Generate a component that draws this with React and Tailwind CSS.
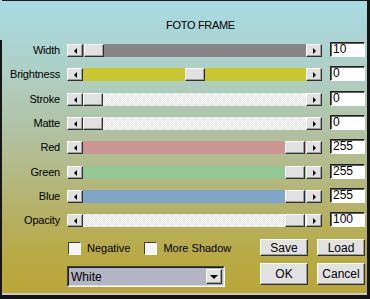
import React from 'react';

const rows = [
  { label: 'Width', value: '10', pos: 0.005, track: 'bg-[#868686]', mt: 'mt-0' },
  { label: 'Brightness', value: '0', pos: 0.505, track: 'bg-[#c9c72f]', mt: 'mt-[11px]' },
  { label: 'Stroke', value: '0', pos: 0, track: 'dots', mt: 'mt-[12px]' },
  { label: 'Matte', value: '0', pos: 0, track: 'dots', mt: 'mt-[11px]' },
  { label: 'Red', value: '255', pos: 1, track: 'bg-[#c99595]', mt: 'mt-[11px]' },
  { label: 'Green', value: '255', pos: 1, track: 'bg-[#95c695]', mt: 'mt-[12px]' },
  { label: 'Blue', value: '255', pos: 1, track: 'bg-[#7fa6c9]', mt: 'mt-[11px]' },
  { label: 'Opacity', value: '100', pos: 1, track: 'dots', mt: 'mt-[11px]' },
];

const raised =
  'bg-[#e1e1e1] border border-t-white border-l-white border-b-[#303030] border-r-[#303030] shadow-[inset_-1px_-1px_0_#a0a0a0]';

function ArrowBtn({ dir }) {
  return (
    <div className={`w-[16px] h-[13px] flex items-center justify-center shrink-0 ${raised}`}>
      {dir === 'left' ? (
        <div className="w-0 h-0 border-y-[3px] border-y-transparent border-r-[3px] border-r-black" />
      ) : (
        <div className="w-0 h-0 border-y-[3px] border-y-transparent border-l-[3px] border-l-black" />
      )}
    </div>
  );
}

function Slider({ pos, track }) {
  const trackCls =
    track === 'dots'
      ? 'bg-white bg-[image:repeating-conic-gradient(#e4e4e4_0_25%,#ffffff_0_50%)] bg-[length:2px_2px]'
      : track;
  return (
    <div className="w-[255px] h-[13px] flex shrink-0">
      <ArrowBtn dir="left" />
      <div className={`relative flex-1 h-full ${trackCls}`}>
        <div
          className={`absolute top-0 w-[20px] h-[13px] ${raised}`}
          style={{ left: `${pos * (222 - 20)}px` }}
        />
      </div>
      <ArrowBtn dir="right" />
    </div>
  );
}

function Checkbox({ label }) {
  return (
    <div className="flex items-center gap-[6px]">
      <div className="w-[13px] h-[13px] bg-[#f4f4f4] border border-t-[#404040] border-l-[#404040] border-b-white border-r-white" />
      <span className="text-[11px] leading-[13px] text-black">{label}</span>
    </div>
  );
}

function Button({ children, h }) {
  return (
    <div className={`w-[48px] ${h} flex items-center justify-center text-[12px] text-black ${raised}`}>
      {children}
    </div>
  );
}

export default function App() {
  return (
    <div
      className="w-[370px] h-[299px] flex bg-[linear-gradient(to_bottom,#a8dae4_0%,#aecfc4_25%,#b1c1a0_45%,#b4b574_65%,#b8aa45_85%,#b9a637_100%)] text-black"
      style={{ fontFamily: '"Liberation Sans", Arial, sans-serif' }}
    >
      <div className="w-[2px] h-full bg-[linear-gradient(to_bottom,transparent_40px,#161616_40px)]" />
      <div className="flex-1 flex flex-col border-t border-t-[#1c1c1c]">
        <div className="h-[43px] pt-[18px] pl-[164px] text-[11px] leading-[13px] tracking-[-0.3px]">FOTO FRAME</div>

        {rows.map((r) => (
          <div key={r.label} className={`flex items-center h-[13px] ${r.mt}`}>
            <div className="w-[58px] text-right text-[11px] leading-[13px] tracking-[-0.2px]">{r.label}</div>
            <div className="ml-[7px]">
              <Slider pos={r.pos} track={r.track} />
            </div>
            <div className="ml-[8px] w-[35px] h-[15px] -mt-[2px] bg-white border border-t-[#202020] border-l-[#202020] border-b-white border-r-white shadow-[inset_1px_1px_0_#606060] text-[12px] leading-[13px] pl-[2px]">
              {r.value}
            </div>
          </div>
        ))}

        <div className="flex mt-[12px] h-[17px]">
          <div className="ml-[66px] mt-[1px] flex gap-[14px]">
            <Checkbox label="Negative" />
            <Checkbox label="More Shadow" />
          </div>
          <div className="ml-auto mr-[2px] flex gap-[9px]">
            <Button h="h-[17px]">Save</Button>
            <Button h="h-[17px]">Load</Button>
          </div>
        </div>

        <div className="flex mt-[7px] h-[22px]">
          <div className="ml-[65px] mt-[3px] w-[158px] h-[21px] flex items-center border border-t-[#404040] border-l-[#404040] border-b-white border-r-white">
            <div className="flex-1 h-full flex items-center bg-[#b3b4c6] border border-t-[#202020] border-l-[#202020] border-b-[#dcdcdc] border-r-[#dcdcdc] pl-[2px] text-[12px]">
              White
              <div className={`ml-auto mr-[1px] w-[16px] h-[15px] flex items-center justify-center ${raised}`}>
                <div className="w-0 h-0 border-x-[4px] border-x-transparent border-t-[4px] border-t-black" />
              </div>
            </div>
          </div>
          <div className="ml-auto mr-[2px] flex gap-[9px]">
            <Button h="h-[22px]">OK</Button>
            <Button h="h-[22px]">Cancel</Button>
          </div>
        </div>

        <div className="mt-auto h-[2px] bg-[#c9c9c9]" />
        <div className="h-[4px] bg-[#141414]" />
      </div>
      <div className="w-[3px] h-full bg-[#141414]" />
    </div>
  );
}
